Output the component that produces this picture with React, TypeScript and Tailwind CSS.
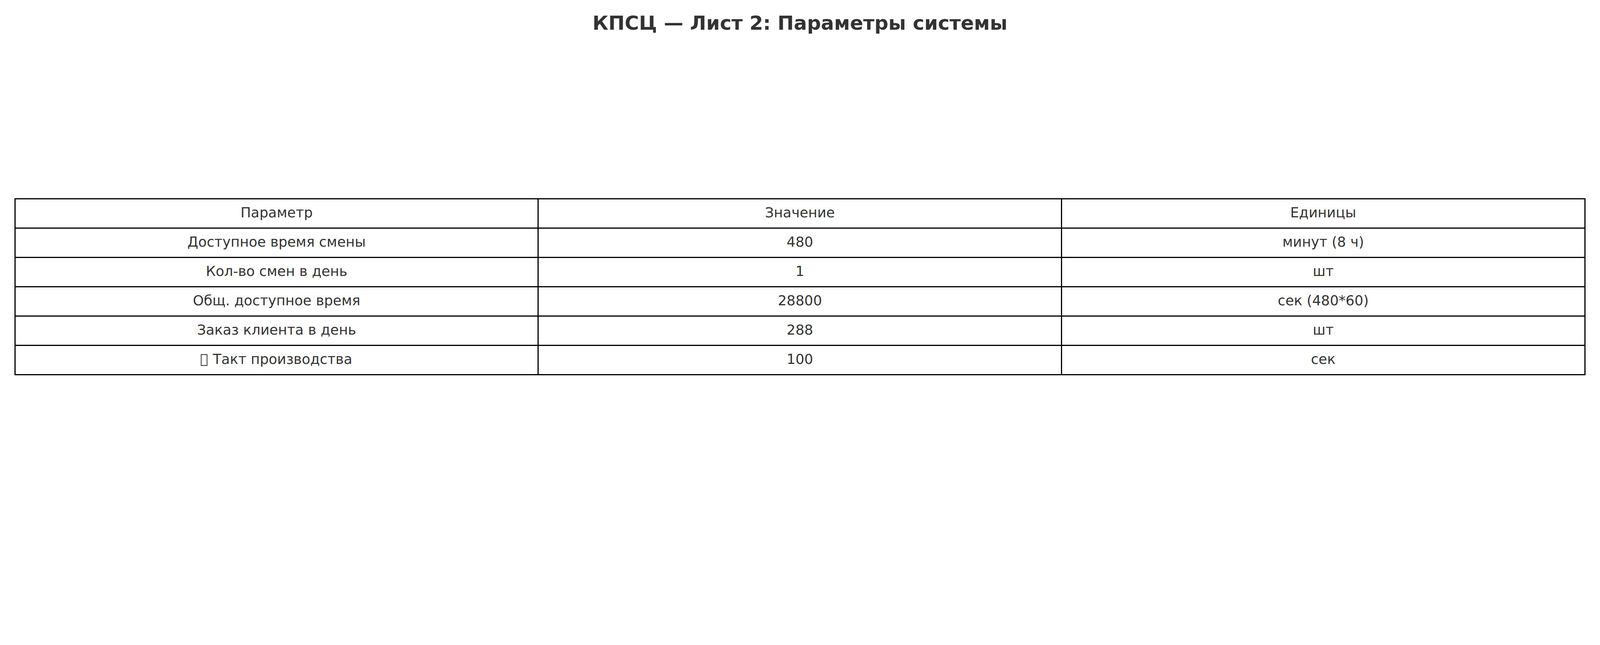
import React from "react";

const rows: [React.ReactNode, string, string][] = [
  ["Параметр", "Значение", "Единицы"],
  ["Доступное время смены", "480", "минут (8 ч)"],
  ["Кол-во смен в день", "1", "шт"],
  ["Общ. доступное время", "28800", "сек (480*60)"],
  ["Заказ клиента в день", "288", "шт"],
  [
    <>
      <span className="inline-block w-[0.4167vw] h-[0.75vw] border-[0.055vw] border-[#333333] align-[-0.125vw] mr-[0.3333vw]" />
      Такт производства
    </>,
    "100",
    "сек",
  ],
];

export default function App() {
  return (
    <div
      className="w-full h-[34.375vw] bg-white text-[#333333] overflow-hidden"
      style={{ fontFamily: '"DejaVu Sans", "Noto Sans", sans-serif' }}
    >
      <div className="pt-[0.6167vw] text-center text-[1.217vw] leading-[1.6667vw] font-bold whitespace-nowrap">
        КПСЦ — Лист 2: Параметры системы
      </div>
      <div className="ml-[0.8958vw] mt-[10.0917vw] w-[98.2083vw] grid grid-cols-[repeat(3,32.7083vw)] border-l-[0.0833vw] border-t-[0.0833vw] border-black">
        {rows.map((r, i) =>
          r.map((c, j) => (
            <div
              key={`${i}-${j}`}
              className="h-[1.8333vw] border-r-[0.0833vw] border-b-[0.0833vw] border-black flex items-center justify-center pb-[0.1042vw] text-[0.8681vw] leading-none whitespace-nowrap"
            >
              <span>{c}</span>
            </div>
          ))
        )}
      </div>
    </div>
  );
}
